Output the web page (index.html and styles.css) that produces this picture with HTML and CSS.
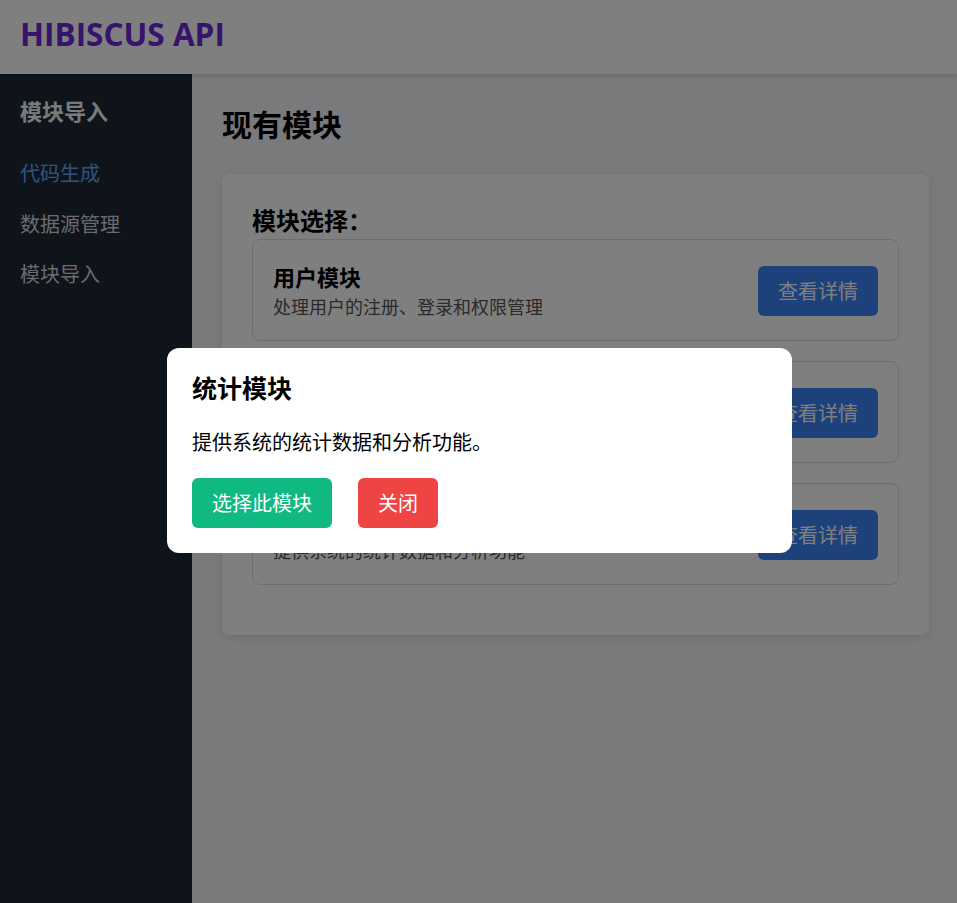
FILE: index.html
```html
<!DOCTYPE html>
<html lang="zh-CN">
<head>
<meta charset="utf-8">
<title>Hibiscus API</title>
<link rel="stylesheet" href="styles.css">
</head>
<body>
<header class="topbar">
  <div class="brand">HIBISCUS API</div>
</header>
<div class="layout">
  <aside class="sidebar">
    <h2 class="side-title">模块导入</h2>
    <nav class="side-nav">
      <a class="side-link active" href="#">代码生成</a>
      <a class="side-link" href="#">数据源管理</a>
      <a class="side-link" href="#">模块导入</a>
    </nav>
  </aside>
  <main class="main">
    <h1 class="page-title">现有模块</h1>
    <section class="card">
      <h3 class="card-title">模块选择：</h3>
      <div class="module">
        <div class="module-info">
          <div class="module-name">用户模块</div>
          <div class="module-desc">处理用户的注册、登录和权限管理</div>
        </div>
        <button class="btn btn-blue">查看详情</button>
      </div>
      <div class="module">
        <div class="module-info">
          <div class="module-name">数据源模块</div>
          <div class="module-desc">管理数据源的连接和配置</div>
        </div>
        <button class="btn btn-blue">查看详情</button>
      </div>
      <div class="module">
        <div class="module-info">
          <div class="module-name">统计模块</div>
          <div class="module-desc">提供系统的统计数据和分析功能</div>
        </div>
        <button class="btn btn-blue">查看详情</button>
      </div>
    </section>
  </main>
</div>
<div class="overlay">
  <div class="modal">
    <h2 class="modal-title">统计模块</h2>
    <p class="modal-text">提供系统的统计数据和分析功能。</p>
    <div class="modal-actions">
      <button class="btn btn-green">选择此模块</button>
      <button class="btn btn-red">关闭</button>
    </div>
  </div>
</div>
</body>
</html>
```
FILE: styles.css
```css
* { box-sizing: border-box; }
html, body { margin: 0; padding: 0; height: 100%; }
body {
  font-family: "Noto Sans CJK SC", "Noto Sans", sans-serif;
  color: #000;
  background: #f3f4f6;
  display: flex;
  flex-direction: column;
  overflow: hidden;
}
.topbar {
  height: 74px;
  flex: none;
  background: #fff;
  display: flex;
  align-items: center;
  padding: 0 20px 7px;
  box-shadow: 0 2px 6px rgba(0,0,0,0.15);
  position: relative;
  z-index: 1;
}
.brand {
  font-family: "Open Sans", "Noto Sans", sans-serif;
  font-weight: 700;
  font-size: 31.5px;
  color: #6d28d9;
  line-height: 1;
}
.layout { flex: 1; display: flex; min-height: 0; }
.sidebar {
  width: 192px;
  flex: none;
  background: #1f2937;
  padding: 20px;
}
.side-title {
  margin: 0 0 22px;
  font-size: 22px;
  line-height: 32px;
  font-weight: 700;
  color: #f3f4f6;
}
.side-nav { display: flex; flex-direction: column; }
.side-link {
  display: block;
  font-size: 20px;
  line-height: 30px;
  padding: 10px 0;
  color: #d1d5db;
  text-decoration: none;
}
.side-link.active { color: #60a5fa; }
.side-link + .side-link { margin-top: 0.5px; }
.main { flex: 1; padding: 30px 28px 30px 30px; }
.page-title {
  margin: 0 0 32px;
  font-size: 30px;
  line-height: 38px;
  font-weight: 700;
}
.card {
  background: #fff;
  border-radius: 8px;
  padding: 30px;
  box-shadow: 0 2px 8px rgba(0,0,0,0.1);
}
.card-title {
  margin: 0 0 4px;
  font-size: 24px;
  line-height: 31px;
  font-weight: 700;
}
.module {
  display: flex;
  align-items: center;
  justify-content: space-between;
  border: 1px solid #ddd;
  border-radius: 8px;
  padding: 23px 20px 21px;
  margin-bottom: 20px;
}
.module-name { font-size: 22px; line-height: 26px; font-weight: 700; }
.module-desc { font-size: 18px; line-height: 26px; color: #555; margin-top: 4px; }
.btn {
  font-family: inherit;
  font-size: 20px;
  line-height: 50px;
  height: 50px;
  padding: 0 20px;
  border: none;
  border-radius: 6px;
  color: #fff;
  cursor: pointer;
}
.btn-blue { background: #3b82f6; }
.btn-green { background: #10b981; }
.btn-red { background: #ef4444; }
.overlay {
  position: fixed;
  inset: 0;
  background: rgba(0,0,0,0.5);
  display: flex;
  align-items: center;
  justify-content: center;
  z-index: 10;
}
.modal {
  width: 625px;
  background: #fff;
  border-radius: 12px;
  padding: 25px;
  margin: -3px 0 0 2px;
}
.modal-title {
  margin: 0 0 28px;
  font-size: 25px;
  line-height: 28px;
  font-weight: 700;
}
.modal-text {
  margin: 0 0 23px;
  font-size: 20px;
  line-height: 26px;
}
.modal-actions { display: flex; gap: 26px; }
```
